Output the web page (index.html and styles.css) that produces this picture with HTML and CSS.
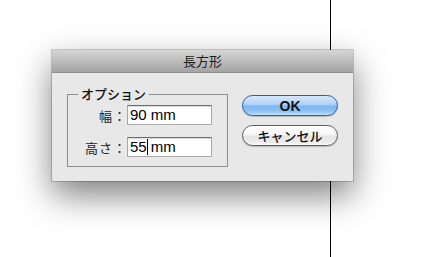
FILE: index.html
```html
<!DOCTYPE html>
<html lang="ja">
<head>
  <meta charset="UTF-8" />
  <title>長方形</title>
  <link rel="stylesheet" href="styles.css">
</head>
<body>
  <div class="guide"></div>

  <div class="dialog">
    <div class="titlebar">長方形</div>
    <div class="dialog-body">
      <fieldset class="group">
        <legend class="group-title">オプション</legend>
        <div class="row">
          <label class="row-label">幅：</label>
          <div class="field">90 mm</div>
        </div>
        <div class="row">
          <label class="row-label">高さ：</label>
          <div class="field">55<span class="caret"></span> mm</div>
        </div>
      </fieldset>

      <div class="buttons">
        <button type="button" class="btn btn-default">OK</button>
        <button type="button" class="btn">キャンセル</button>
      </div>
    </div>
  </div>
</body>
</html>
```

FILE: styles.css
```css
* {
  margin: 0;
  padding: 0;
  box-sizing: border-box;
}

body {
  font-family: "Liberation Sans", "Noto Sans CJK JP", sans-serif;
  background: #ffffff;
  width: 431px;
  height: 257px;
  overflow: hidden;
  position: relative;
  padding: 50px 0 0 52px;
  color: #000;
}

/* guide line on the artboard, behind the dialog */
.guide {
  position: absolute;
  top: 0;
  left: 330px;
  width: 1px;
  height: 100%;
  background: #000;
  z-index: 0;
}

.dialog {
  position: relative;
  z-index: 1;
  width: 301px;
  background: #e8e8e8;
  box-shadow: 0 0 0 1px rgba(0, 0, 0, 0.18), 0 14px 32px rgba(0, 0, 0, 0.5);
}

.titlebar {
  height: 23px;
  line-height: 22px;
  text-align: center;
  font-family: "Noto Sans CJK JP", sans-serif;
  font-size: 13px;
  color: #1c1c1c;
  background: linear-gradient(#d6d6d6 0%, #bdbdbd 50%, #a3a3a3 100%);
  border-bottom: 1px solid #8e8e8e;
}

.dialog-body {
  display: flex;
  align-items: flex-start;
  gap: 14px;
  padding: 14px 15px 14px 15px;
}

/* Option group box */
.group {
  flex: none;
  width: 161px;
  border: 1px solid #8f8f8f;
  padding: 4px 15px 9px 14px;
}

.group-title {
  margin-left: -4px;
  padding: 0 3px;
  font-family: "Noto Sans CJK JP", sans-serif;
  font-size: 13px;
  font-weight: 500;
  line-height: 14px;
  color: #111;
}

.row {
  display: flex;
  align-items: center;
}

.row + .row {
  margin-top: 12px;
}

.row-label {
  width: 45px;
  text-align: right;
  font-family: "Noto Sans CJK JP", sans-serif;
  font-size: 13px;
  letter-spacing: 1px;
  color: #222;
}

.field {
  width: 85px;
  height: 20px;
  padding: 0 2px;
  line-height: 18px;
  font-size: 15px;
  color: #000;
  background: #fff;
  border: 1px solid #a9a9a9;
  border-top-color: #6d6d6d;
  box-shadow: inset 0 1px 1px rgba(0, 0, 0, 0.15);
  white-space: nowrap;
}

.caret {
  display: inline-block;
  width: 1px;
  height: 16px;
  margin-right: -1px;
  background: #000;
  vertical-align: -3px;
}

/* Buttons */
.buttons {
  flex: none;
  width: 96px;
  margin-top: 8px;
  display: flex;
  flex-direction: column;
  gap: 9px;
}

.btn {
  height: 21px;
  border-radius: 11px;
  border: 1px solid #5f5f5f;
  font-family: "Noto Sans CJK JP", sans-serif;
  font-size: 13px;
  font-weight: 500;
  line-height: 18px;
  color: #111;
  background: linear-gradient(#ffffff 0%, #f6f6f6 45%, #e4e4e4 55%, #ececec 85%, #fafafa 100%);
  box-shadow: 0 1px 1px rgba(0, 0, 0, 0.2);
  cursor: pointer;
}

.btn-default {
  font-family: "Liberation Sans", sans-serif;
  font-size: 14px;
  font-weight: 700;
  border-color: #2d5ea6;
  background: linear-gradient(#d6e8fc 0%, #b0d1f7 45%, #80b7f1 52%, #8ec1f4 80%, #bfe0fb 100%);
}
```
